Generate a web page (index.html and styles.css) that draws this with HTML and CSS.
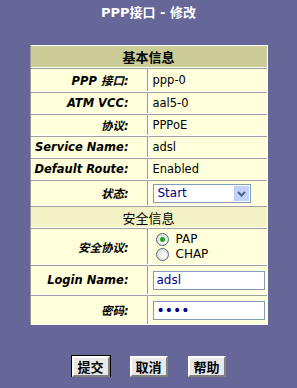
FILE: index.html
```html
<!DOCTYPE html>
<html>
<head>
    <title>PPP接口 - 修改</title>
    <link rel="stylesheet" href="styles.css">
</head>
<body>
    <div class="title">PPP接口 - 修改</div>

    <table class="form">
        <tr class="h21">
            <th colspan="2" class="head">基本信息</th>
        </tr>
        <tr class="h23">
            <td class="label">PPP 接口:</td>
            <td class="value">ppp-0</td>
        </tr>
        <tr class="h21">
            <td class="label">ATM VCC:</td>
            <td class="value">aal5-0</td>
        </tr>
        <tr class="h21">
            <td class="label">协议:</td>
            <td class="value">PPPoE</td>
        </tr>
        <tr class="h21">
            <td class="label">Service Name:</td>
            <td class="value">adsl</td>
        </tr>
        <tr class="h21">
            <td class="label">Default Route:</td>
            <td class="value">Enabled</td>
        </tr>
        <tr class="h25">
            <td class="label">状态:</td>
            <td class="value">
                <div class="select">
                    <span class="select-text">Start</span>
                    <span class="select-arrow">
                        <svg width="15" height="15" viewBox="0 0 15 15">
                            <path d="M4 6 L7.5 9.5 L11 6" fill="none" stroke="#4d6185" stroke-width="2"/>
                        </svg>
                    </span>
                </div>
            </td>
        </tr>
        <tr class="h21">
            <td colspan="2" class="sub">安全信息</td>
        </tr>
        <tr class="h36">
            <td class="label">安全协议:</td>
            <td class="value">
                <div class="radio-row"><span class="radio checked"></span>PAP</div>
                <div class="radio-row"><span class="radio"></span>CHAP</div>
            </td>
        </tr>
        <tr class="h29">
            <td class="label">Login Name:</td>
            <td class="value"><input class="field" type="text" value="adsl"></td>
        </tr>
        <tr class="h29">
            <td class="label">密码:</td>
            <td class="value"><input class="field pass" type="password" value="adsl"></td>
        </tr>
    </table>

    <div class="buttons">
        <button class="btn default">提交</button>
        <button class="btn">取消</button>
        <button class="btn">帮助</button>
    </div>
</body>
</html>
```

FILE: styles.css
```css
body {
    margin: 0;
    background-color: #666699;
    font-family: "DejaVu Sans", "Noto Sans CJK SC", sans-serif;
    font-size: 11px;
}

.title {
    padding-top: 5px;
    height: 40px;
    line-height: 16px;
    text-align: center;
    font-size: 13px;
    font-weight: bold;
    color: #fff;
}

.form {
    width: 238px;
    margin: 0 auto;
    border-collapse: separate;
    border-spacing: 0 1px;
    background-color: #fff;
    border-left: 1px solid #999;
    border-right: 1px solid #fff;
}

.form td, .form th {
    box-sizing: border-box;
    padding: 0;
    vertical-align: middle;
}

.form td {
    border-top: 1px solid #a0a0a0;
    background-color: #ffffdc;
}

.h21 td, .h21 th { height: 21px; }
.h23 td { height: 23px; }
.h25 td { height: 25px; }
.h29 td { height: 29px; }
.h36 td { height: 36px; }

.head {
    background-color: #cccc99;
    font-size: 13px;
    font-weight: bold;
    text-align: center;
    color: #000;
}

.form td.sub {
    background-color: #f2f2c4;
    text-align: center;
    font-size: 13px;
}

.label {
    width: 117px;
    padding-right: 18px !important;
    text-align: right;
    font-size: 11.5px;
    font-weight: bold;
    font-style: italic;
    border-right: 1px solid #999;
}

.value {
    padding-left: 4px !important;
    border-left: 1px solid #fff;
    color: #000;
    font-size: 11.5px;
}

.select {
    display: flex;
    align-items: center;
    width: 98px;
    height: 19px;
    box-sizing: border-box;
    border: 1px solid #7f9db9;
    background-color: #fff;
    color: #000080;
}

.select-text {
    flex: 1;
    padding-left: 4px;
    font-size: 12px;
}

.select-arrow {
    display: flex;
    width: 15px;
    height: 15px;
    margin-right: 1px;
    background-color: #c1d3fb;
}

.radio-row {
    display: flex;
    align-items: center;
    height: 15px;
    padding-left: 3px;
    font-size: 12px;
}

.radio {
    width: 13px;
    height: 13px;
    box-sizing: border-box;
    margin-right: 7px;
    border: 1px solid #4a6a8a;
    border-radius: 50%;
    background: radial-gradient(circle at 60% 60%, #ffffff 0%, #dcdcd6 80%);
    display: flex;
    align-items: center;
    justify-content: center;
}

.radio.checked::after {
    content: "";
    width: 5px;
    height: 5px;
    border-radius: 50%;
    background-color: #21a121;
}

.field {
    display: block;
    width: 112px;
    height: 19px;
    box-sizing: border-box;
    margin: 0;
    padding: 0 3px;
    border: 1px solid #7f9db9;
    background-color: #fff;
    color: #000080;
    font-family: "DejaVu Sans", sans-serif;
    font-size: 12px;
}

.field.pass {
    font-size: 14px;
}

.buttons {
    display: flex;
    justify-content: center;
    gap: 20px;
    margin-top: 31px;
}

.btn {
    width: 38px;
    height: 21px;
    padding: 0;
    border: 2px solid;
    border-color: #fff #808080 #808080 #fff;
    background-color: #e8e8e8;
    font-family: "Noto Sans CJK SC", sans-serif;
    font-size: 13px;
    font-weight: bold;
    line-height: 15px;
    color: #000;
}

.btn.default {
    outline: 1px solid #000;
}
```
